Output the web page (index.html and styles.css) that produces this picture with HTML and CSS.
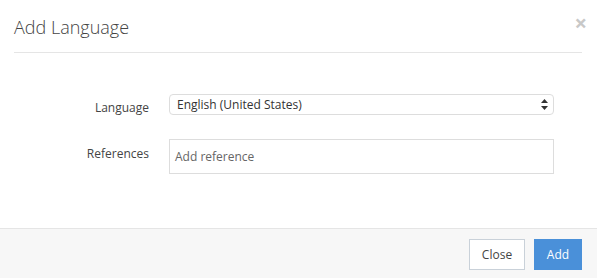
FILE: index.html
```html
<!DOCTYPE html>
<html>
<head>
<meta charset="utf-8">
<link rel="stylesheet" href="styles.css">
</head>
<body>
<div class="modal">
  <div class="modal-header">
    <h1 class="modal-title">Add Language</h1>
    <span class="close-x">×</span>
  </div>
  <div class="modal-body">
    <div class="form-row">
      <label class="form-label label-lang">Language</label>
      <div class="select-box">
        <span class="select-value">English (United States)</span>
        <svg class="select-arrows" width="7" height="11" viewBox="0 0 7 11"><path d="M3.5 0 L7 4 H0 Z M0 7 H7 L3.5 11 Z" fill="#333"/></svg>
      </div>
    </div>
    <div class="form-row">
      <label class="form-label label-ref">References</label>
      <div class="input-box"><span class="placeholder">Add reference</span></div>
    </div>
  </div>
  <div class="modal-footer">
    <button class="btn btn-default">Close</button>
    <button class="btn btn-primary">Add</button>
  </div>
</div>
</body>
</html>
```
FILE: styles.css
```css
html, body {
  margin: 0;
  padding: 0;
  background: #fff;
  font-family: "Open Sans", "Liberation Sans", sans-serif;
  color: #333;
}
.modal {
  width: 597px;
  height: 278px;
  display: flex;
  flex-direction: column;
}
.modal-header {
  margin: 0 15px 0 14px;
  height: 53px;
  border-bottom: 1px solid #e5e5e5;
  display: flex;
  align-items: center;
  justify-content: space-between;
  box-sizing: border-box;
}
.modal-title {
  margin: 0;
  font-size: 18px;
  font-weight: 300;
  color: #444;
  line-height: 24px;
  padding-top: 1px;
}
.close-x {
  font-size: 22px;
  font-weight: 700;
  color: #c8c8c8;
  line-height: 20px;
  margin-right: -5px;
  padding-bottom: 8px;
}
.modal-body {
  flex: 1;
  padding: 41px 0 0 14px;
  display: flex;
  flex-direction: column;
  gap: 22px;
}
.form-row {
  display: grid;
  grid-template-columns: 135px 385px;
  column-gap: 20px;
  align-items: start;
}
.form-label {
  text-align: right;
  font-size: 12px;
  color: #444;
  line-height: 18px;
}
.label-lang { padding-top: 5px; }
.label-ref { padding-top: 6px; }
.select-box {
  height: 21px;
  border: 1px solid #ddd;
  border-radius: 4px;
  box-sizing: border-box;
  display: flex;
  align-items: center;
  justify-content: space-between;
  padding: 0 5px 0 7px;
  font-size: 12px;
  color: #333;
}
.select-arrows { display: block; }
.input-box {
  height: 35px;
  border: 1px solid #ddd;
  box-sizing: border-box;
  display: flex;
  align-items: center;
  padding: 0 5px;
  font-size: 12px;
}
.placeholder { color: #666; }
.modal-footer {
  height: 50px;
  box-sizing: border-box;
  border-top: 1px solid #e5e5e5;
  background: #f7f7f7;
  display: flex;
  justify-content: flex-end;
  align-items: flex-start;
  gap: 9px;
  padding: 10px 15px 0 0;
}
.btn {
  font-family: "Open Sans", "Liberation Sans", sans-serif;
  font-size: 12px;
  height: 31px;
  box-sizing: border-box;
  border-radius: 0;
  margin: 0;
  cursor: pointer;
}
.btn-default {
  width: 56px;
  background: #fff;
  border: 1px solid #c9d1d9;
  color: #444;
}
.btn-primary {
  width: 48px;
  background: #4a90d9;
  border: 1px solid #4a90d9;
  color: #fff;
}
```
